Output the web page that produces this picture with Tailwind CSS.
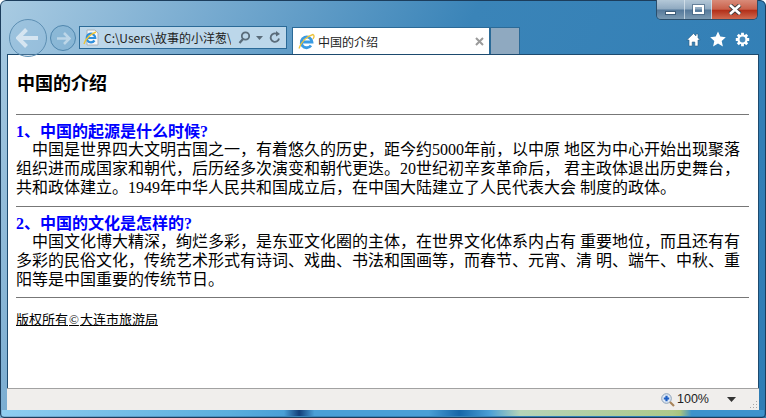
<!DOCTYPE html>
<html lang="zh-CN">
<head>
  <meta charset="UTF-8">
  <title>中国的介绍</title>
  <script src="https://cdn.jsdelivr.net/npm/@tailwindcss/browser@4"></script>
</head>
<body class="m-0 overflow-hidden">
  <!-- IE window -->
  <div class="relative w-[766px] h-[418px] flex flex-col overflow-hidden rounded-t-[6px] bg-[linear-gradient(115deg,#a9cbe2_0%,#78abd0_22%,#3a84b8_50%,#2f7db5_100%)] font-['Liberation_Serif','Noto_Sans_CJK_SC',serif]">

    <!-- Window edge -->
    <div class="absolute inset-0 rounded-t-[6px] rounded-b-[4px] border border-[#1c3d5c] pointer-events-none"></div>

    <!-- Window controls -->
    <div class="absolute top-0 right-[8px] w-[102px] h-[20px] flex rounded-b-[5px] border border-t-0 border-[#2a4e6c] overflow-hidden">
      <div class="w-[28px] flex items-center justify-center border-r border-[#dfe9f1]/70 bg-[linear-gradient(#b4c8d8_0%,#8fa9c0_48%,#54789a_52%,#7b9ab2_100%)]">
        <div class="w-[11px] h-[4px] mt-[6px] bg-white border border-[#3d5c78]"></div>
      </div>
      <div class="w-[27px] flex items-center justify-center border-r border-[#dfe9f1]/70 bg-[linear-gradient(#b4c8d8_0%,#8fa9c0_48%,#54789a_52%,#7b9ab2_100%)]">
        <div class="w-[11px] h-[9px] border-2 border-white outline outline-[#3d5c78]/60"></div>
      </div>
      <div class="flex-1 flex items-center justify-center bg-[linear-gradient(#d98b79_0%,#c9604a_48%,#b3301a_55%,#cf6a50_100%)]">
        <svg width="14" height="11" viewBox="0 0 14 11"><path d="M2 1l10 9M12 1L2 10" stroke="#3d3d3d" stroke-width="4.400"/><path d="M2 1l10 9M12 1L2 10" stroke="#fff" stroke-width="2.600"/></svg>
      </div>
    </div>

    <!-- Toolbar -->
    <div class="h-[54px] shrink-0 flex items-end pl-[9px] pr-[16px] relative">
      <div class="flex items-start h-[35px] w-full">
        <!-- Back -->
        <div class="w-[38px] h-[38px] rounded-full border border-[#5d8fb3] bg-[#8fbbd9]/30 flex items-center justify-center shrink-0">
          <svg width="24" height="20" viewBox="0 0 24 20"><path d="M10.500 1.500L2 10l8.500 8.500M3 10h19" fill="none" stroke="#d5e5f1" stroke-width="4"/></svg>
        </div>
        <!-- Forward -->
        <div class="w-[26px] h-[26px] mt-[6px] ml-[3px] rounded-full border border-[#4f86ad] bg-[#6ea5cb]/30 flex items-center justify-center shrink-0">
          <svg width="15" height="13" viewBox="0 0 15 13"><path d="M8 1l5.500 5.500L8 12M13 6.500H1" fill="none" stroke="#bcd6e8" stroke-width="2.600"/></svg>
        </div>
        <!-- Address bar -->
        <div class="w-[208px] h-[23px] mt-[7px] ml-[3px] shrink-0 flex items-center border border-[#2b6a97] bg-[#bcd7ea] font-['Noto_Sans_CJK_SC','Liberation_Sans',sans-serif] text-[12px] text-[#222]">
          <svg class="ml-[3px] shrink-0" width="17" height="17" viewBox="0 0 17 17"><path d="M4 1h8l3 3v12H4z" fill="#f5f7fa" stroke="#a8b2bc"/><path d="M11.500 11.500A4.300 4.300 0 1 1 12.300 9H4.500" fill="none" stroke="#2f8fdc" stroke-width="2.200"/><path d="M1 15C3 9 8 5 13 3" fill="none" stroke="#eec437" stroke-width="1.400"/></svg>
          <span class="ml-[4px] w-[127px] overflow-hidden whitespace-nowrap leading-[21px]">C:\Users\故事的小洋葱\</span>
          <svg class="ml-[7px] shrink-0" width="13" height="13" viewBox="0 0 13 13"><circle cx="7.500" cy="5" r="3.700" fill="none" stroke="#5a6c7a" stroke-width="1.800"/><path d="M5 8l-3.500 4" stroke="#5a6c7a" stroke-width="2.200"/></svg>
          <svg class="ml-[5px] shrink-0" width="7" height="4" viewBox="0 0 7 4"><path d="M0 0h7L3.500 4z" fill="#5a6c7a"/></svg>
          <svg class="ml-[6px] shrink-0" width="12" height="13" viewBox="0 0 12 13"><path d="M10 7.500A4.200 4.200 0 1 1 8 3" fill="none" stroke="#5a6c7a" stroke-width="1.800"/><path d="M7 0l4 3-4 2.500z" fill="#5a6c7a"/></svg>
        </div>
        <!-- Active tab -->
        <div class="w-[198px] h-[27px] mt-[8px] ml-[5px] shrink-0 flex items-center bg-white border-t border-x border-[#2b6a97] text-[12px] text-[#222] font-['Noto_Sans_CJK_SC',sans-serif]">
          <svg class="ml-[5px] shrink-0" width="17" height="17" viewBox="0 0 17 17"><path d="M13 12.500A5.400 5.400 0 1 1 14 9H4" fill="none" stroke="#3a9be2" stroke-width="2.800"/><path d="M1 15.500C3 9 9 3 15 1.500c1.500 1 1 3 0 4.500" fill="none" stroke="#ecc23a" stroke-width="1.300"/></svg>
          <span class="ml-[3px] flex-1 leading-[25px]">中国的介绍</span>
          <svg class="mr-[5px] shrink-0" width="9" height="9" viewBox="0 0 9 9"><path d="M1 1l7 7M8 1L1 8" stroke="#9a9a9a" stroke-width="2"/></svg>
        </div>
        <!-- New tab -->
        <div class="w-[30px] h-[27px] mt-[8px] shrink-0 bg-[#8fa9c0] border-t border-x border-[#2b6a97]"></div>
        <!-- Tools -->
        <div class="ml-auto mt-[12px] flex items-center gap-[9px]">
          <svg width="15" height="15" viewBox="0 0 15 15"><path d="M7.500 1.500L.8 8H3v6h3.200v-4h2.600v4H12V8h2.200L12 5.800V2h-2v1.900z" fill="#fff" stroke="#2c5f85" stroke-width=".6"/></svg>
          <svg width="16" height="16" viewBox="0 0 16 16"><path d="M8 .5l2.300 5.100 5.500.6-4.100 3.700 1.200 5.500L8 12.500l-4.900 2.900 1.200-5.500L.2 6.200l5.500-.6z" fill="#fff"/></svg>
          <svg width="15" height="15" viewBox="0 0 15 15"><path d="M7.500 .8v3M7.500 11.200v3M.8 7.500h3M11.200 7.500h3M2.800 2.800l2 2M10.200 10.200l2 2M12.200 2.800l-2 2M4.800 10.200l-2 2" stroke="#fff" stroke-width="2.800"/><circle cx="7.500" cy="7.500" r="4" fill="#4a8dbd" stroke="#fff" stroke-width="2.200"/></svg>
        </div>
      </div>
    </div>

    <!-- Page content -->
    <main class="mx-[7px] h-[334px] shrink-0 bg-white border border-[#1d4a6e] border-b-0 pl-[8px] pr-[9px] text-black">
      <h1 class="mt-[17px] ml-[1px] text-[18px] leading-[24px] font-bold">中国的介绍</h1>
      <hr class="mt-[18px] border-t-0 h-[1px] bg-[#777]">
      <h2 class="mt-[8px] text-[16px] leading-[17px] font-bold text-[#0000ff]">1、中国的起源是什么时候?</h2>
      <p class="text-[16px] leading-[19px] whitespace-nowrap">
        <span class="inline-block w-[16px]"></span>中国是世界四大文明古国之一，有着悠久的历史，距今约5000年前，以中原 地区为中心开始出现聚落<br>
        组织进而成国家和朝代，后历经多次演变和朝代更迭。20世纪初辛亥革命后， 君主政体退出历史舞台，<br>
        共和政体建立。1949年中华人民共和国成立后，在中国大陆建立了人民代表大会 制度的政体。
      </p>
      <hr class="mt-[9px] border-t-0 h-[1px] bg-[#777]">
      <h2 class="mt-[8px] text-[16px] leading-[17px] font-bold text-[#0000ff]">2、中国的文化是怎样的?</h2>
      <p class="text-[16px] leading-[19px] whitespace-nowrap">
        <span class="inline-block w-[16px]"></span>中国文化博大精深，绚烂多彩，是东亚文化圈的主体，在世界文化体系内占有 重要地位，而且还有有<br>
        多彩的民俗文化，传统艺术形式有诗词、戏曲、书法和国画等，而春节、元宵、清 明、端午、中秋、重<br>
        阳等是中国重要的传统节日。
      </p>
      <hr class="mt-[8px] border-t-0 h-[1px] bg-[#777]">
      <p class="mt-[14px] text-[13px] leading-[16px] underline">版权所有<span class="px-[1px]">©</span>大连市旅游局</p>
    </main>

    <!-- Status bar -->
    <div class="relative mx-[7px] h-[22px] shrink-0 flex items-center justify-end bg-[#f0eeec] border-t border-[#a2a2a2] pr-[23px] text-[12.500px] text-[#222] font-['Liberation_Sans',sans-serif]">
      <svg class="shrink-0" width="14" height="14" viewBox="0 0 14 14"><circle cx="5.500" cy="5.500" r="4.800" fill="#dfe9f5" stroke="#8aa0b8"/><path d="M2.800 5.500h5.400M5.500 2.800v5.400" stroke="#1f5fc4" stroke-width="2.200"/><path d="M9 9l4 4" stroke="#a8845a" stroke-width="2.200"/></svg>
      <span class="ml-[2px]">100%</span>
      <svg class="ml-[18px] shrink-0" width="9" height="5" viewBox="0 0 9 5"><path d="M0 0h9L4.500 5z" fill="#333"/></svg>
      <!-- Resize grip -->
      <svg class="absolute right-[1px] bottom-[1px]" width="9" height="9" viewBox="0 0 9 9"><path d="M7 1h1v1H7zM4 4h1v1H4zM7 4h1v1H7zM1 7h1v1H1zM4 7h1v1H4zM7 7h1v1H7z" fill="#a5a5a5"/></svg>
    </div>

    <!-- Bottom frame -->
    <div class="flex-1 pb-[2px]">
      <div class="h-full mx-[2px] bg-[linear-gradient(90deg,#8fcdf0_0%,#5aaedd_30%,#4a9fd6_37%,#123f7a_39%,#4a9fd6_41%,#4a9fd6_56%,#1766a8_60%,#4a9fd6_64%,#b6d4b8_68%,#aec98a_88%,#a8c47e_89%,#3d92cc_90.500%,#3d92cc_100%)]"></div>
    </div>
  </div>
</body>
</html>
